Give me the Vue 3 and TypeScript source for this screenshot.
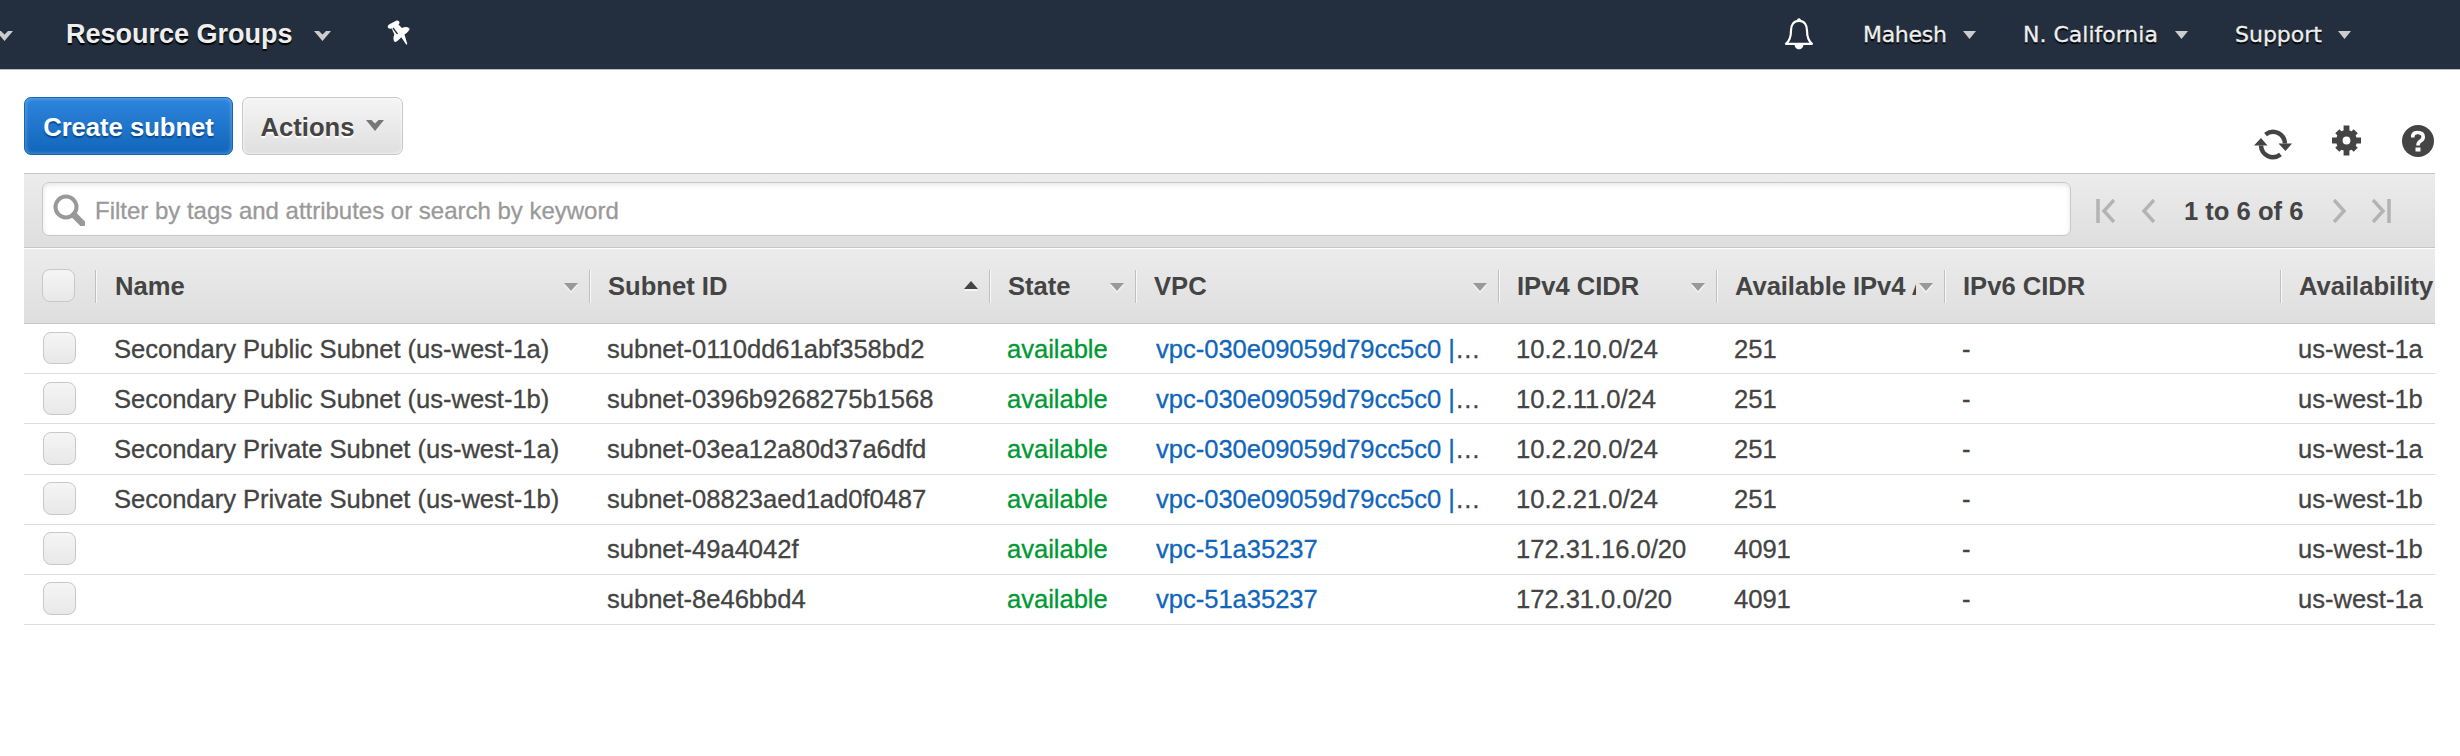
<script setup lang="ts">
interface Column { label: string; sort: 'up' | 'down' | '' }
interface Subnet { name: string; id: string; vpc: string; more: boolean; cidr: string; free: string; zone: string }

const columns: Column[] = [
  { label: 'Name', sort: 'down' },
  { label: 'Subnet ID', sort: 'up' },
  { label: 'State', sort: 'down' },
  { label: 'VPC', sort: 'down' },
  { label: 'IPv4 CIDR', sort: 'down' },
  { label: 'Available IPv4 A', sort: 'down' },
  { label: 'IPv6 CIDR', sort: '' },
  { label: 'Availability', sort: '' },
]

const subnets: Subnet[] = [
  { name: 'Secondary Public Subnet (us-west-1a)', id: 'subnet-0110dd61abf358bd2', vpc: 'vpc-030e09059d79cc5c0', more: true, cidr: '10.2.10.0/24', free: '251', zone: 'us-west-1a' },
  { name: 'Secondary Public Subnet (us-west-1b)', id: 'subnet-0396b9268275b1568', vpc: 'vpc-030e09059d79cc5c0', more: true, cidr: '10.2.11.0/24', free: '251', zone: 'us-west-1b' },
  { name: 'Secondary Private Subnet (us-west-1a)', id: 'subnet-03ea12a80d37a6dfd', vpc: 'vpc-030e09059d79cc5c0', more: true, cidr: '10.2.20.0/24', free: '251', zone: 'us-west-1a' },
  { name: 'Secondary Private Subnet (us-west-1b)', id: 'subnet-08823aed1ad0f0487', vpc: 'vpc-030e09059d79cc5c0', more: true, cidr: '10.2.21.0/24', free: '251', zone: 'us-west-1b' },
  { name: '', id: 'subnet-49a4042f', vpc: 'vpc-51a35237', more: false, cidr: '172.31.16.0/20', free: '4091', zone: 'us-west-1b' },
  { name: '', id: 'subnet-8e46bbd4', vpc: 'vpc-51a35237', more: false, cidr: '172.31.0.0/20', free: '4091', zone: 'us-west-1a' },
]
</script>

<template>
  <div class="page">
    <nav class="nav">
      <svg class="caret first" width="17" height="10" viewBox="0 0 17 10"><path d="M0 0h5l3.500 3.500L12 0h5L8.500 10z" /></svg>
      <span class="brand">Resource Groups</span>
      <svg class="caret" width="17" height="10" viewBox="0 0 17 10"><path d="M0 0h5l3.500 3.500L12 0h5L8.500 10z" /></svg>
      <svg class="pin" width="24" height="25" viewBox="0 0 24 25">
        <path d="M.6 7Q.6 5.500 2 4.500L9.500.6Q11.500 0 12.500 2 12.700 3.500 11.500 4.500L15 8Q19.500 6 22.500 8.500 23.200 10.500 17.500 14.500L20.300 24 19.300 24.700 14.300 17.200Q9.500 22.500 7.500 21.800 5.500 19 7.300 14.500L4.800 8.500Q1.500 9.500.6 7z" />
        <path class="pin-slot" d="m6 8 4.500 6" />
      </svg>
      <svg class="bell" width="30" height="32" viewBox="0 0 30 32">
        <path class="bell-body" d="M15 2.800C9.500 2.800 7 7 7 12.500c0 7-1.500 10.500-5 13.300h26c-3.500-2.800-5-6.300-5-13.300C23 7 20.500 2.800 15 2.800z" />
        <path class="bell-fill" d="M13 3a2 2.800 0 0 1 4 0zM10.500 26h9c0 7-9 7-9 0z" />
      </svg>
      <span class="item mahesh">Mahesh</span>
      <svg class="small-caret" width="13" height="8" viewBox="0 0 13 8"><path d="M0 0h13L6.500 8z" /></svg>
      <span class="item region">N. California</span>
      <svg class="small-caret" width="13" height="8" viewBox="0 0 13 8"><path d="M0 0h13L6.500 8z" /></svg>
      <span class="item support">Support</span>
      <svg class="small-caret" width="13" height="8" viewBox="0 0 13 8"><path d="M0 0h13L6.500 8z" /></svg>
    </nav>

    <div class="toolbar">
      <button class="btn primary">Create subnet</button>
      <button class="btn plain">
        Actions
        <svg width="18" height="12" viewBox="0 0 18 12"><path d="M0 1h5.500L9 4.500 12.500 1H18L9 12z" /></svg>
      </button>
      <div class="tools">
        <svg class="refresh" width="38" height="31" viewBox="0 0 38 31">
          <path class="arc" d="M11.500 5.500C20 -1 30.500 5 31 14.500M26.500 25.500C18 32 7.500 26 7 16.500" />
          <path d="M24.500 14.500H38L31.500 22zM0 16.500h13.500L7 9z" />
        </svg>
        <svg class="gear" width="29" height="31" viewBox="0 0 29 31">
          <path class="spokes" d="M14.500.5v30M0 15.500h29" />
          <path class="spokes" d="m5.300 6.300 18.400 18.400M23.700 6.300 5.300 24.700" />
          <circle cx="14.500" cy="15.500" r="10.500" />
          <circle class="hub" cx="14.500" cy="15.500" r="3.900" />
        </svg>
        <svg class="help" width="32" height="32" viewBox="0 0 32 32">
          <circle cx="16" cy="16" r="16" />
          <path class="mark" d="M10.800 12.500V10.500Q11.500 7.500 15.500 7.500q5.700 0 5.700 4.500 0 2.500-2.700 4-2.500 1.500-2.500 4.500" />
          <path class="dot" d="M13.500 22.500h5v4h-5z" />
        </svg>
      </div>
    </div>

    <div class="filter">
      <div class="search">
        <svg width="32" height="32" viewBox="0 0 32 32"><circle cx="13" cy="13" r="10.500" /><path d="m21 21 8.500 8.500" /></svg>
        <span>Filter by tags and attributes or search by keyword</span>
      </div>
      <div class="pager">
        <svg width="19" height="24" viewBox="0 0 19 24"><path d="M2 0v24M18 1 8 12l10 11" /></svg>
        <svg class="prev" width="14" height="24" viewBox="0 0 14 24"><path d="M13 1 3 12l10 11" /></svg>
        <span>1 to 6 of 6</span>
        <svg class="next" width="14" height="24" viewBox="0 0 14 24"><path d="m1 1 10 11L1 23" /></svg>
        <svg class="last" width="19" height="24" viewBox="0 0 19 24"><path d="M17 0v24M1 1l10 11L1 23" /></svg>
      </div>
    </div>

    <div class="grid head">
      <div class="check-cell"><span class="check"></span></div>
      <div v-for="c in columns" :key="c.label" class="th">
        <span class="label">{{ c.label }}</span>
        <span v-if="c.sort" class="sort" :class="c.sort"></span>
      </div>
    </div>
    <div v-for="(s, i) in subnets" :key="s.id" class="grid row" :class="{ tall: i === 2, raised: i > 2 }">
      <div class="check-cell"><span class="check"></span></div>
      <div class="td">{{ s.name }}</div>
      <div class="td">{{ s.id }}</div>
      <div class="td state">available</div>
      <div class="td vpc"><a>{{ s.vpc }}<template v-if="s.more"> |</template></a><template v-if="s.more">…</template></div>
      <div class="td">{{ s.cidr }}</div>
      <div class="td">{{ s.free }}</div>
      <div class="td">-</div>
      <div class="td">{{ s.zone }}</div>
    </div>
  </div>
</template>

<style>
body { margin: 0; background: #fff; }
</style>

<style scoped>
.page { width: 2460px; height: 756px; overflow: hidden; background: #fff; color: #444; font: 25.6px/30px "Liberation Sans", Arial, sans-serif; }
.page * { box-sizing: border-box; }
svg { display: block; flex: none; }
.nav { height: 70px; display: flex; align-items: flex-start; background: #232f3e; border-bottom: 1px solid #b9bec5; overflow: hidden; white-space: nowrap; }
.caret { margin-top: 31px; fill: #ccc; }
.caret.first { margin-left: -4px; }
.brand { width: 229px; margin: 19px 19px 0 53px; font-size: 27px; font-weight: bold; color: #eee; text-shadow: 0 2px 1px #000; }
.pin { margin: 20px 0 0 56px; fill: #fff; }
.pin-slot { stroke: #232f3e; stroke-width: 1.300; }
.bell { margin: 18px 0 0 1373px; }
.bell-body { fill: none; stroke: #fff; stroke-width: 2.200; stroke-linejoin: round; }
.bell-fill { fill: #fff; }
.item { margin-top: 20px; font: 22px/30px "DejaVu Sans", Verdana, sans-serif; color: #eee; text-shadow: 0 2px 1px #000; -webkit-text-stroke: .3px #eee; }
.mahesh { width: 100px; margin-left: 49px; letter-spacing: -0.300px; }
.region { width: 152px; margin-left: 47px; }
.support { width: 103px; margin-left: 47px; }
.small-caret { margin-top: 31px; fill: #ccc; }
.toolbar { height: 103px; padding: 27px 26px 0 24px; display: flex; align-items: flex-start; }
.btn { height: 58px; padding: 0; border-radius: 7px; font: bold 25.600px/58px "Liberation Sans", Arial, sans-serif; display: flex; justify-content: center; white-space: nowrap; }
.primary { width: 209px; color: #fff; border: 1px solid #1166bb; background: linear-gradient(#2e85dc, #1166bb); box-shadow: inset 0 0 4px rgba(255, 255, 255, .4); text-shadow: 0 2px 1px #0a4a8c; }
.plain { width: 161px; margin-left: 9px; color: #444; border: 1px solid #c8c8c8; background: linear-gradient(#f5f5f5, #dfdfdf); box-shadow: inset 0 0 3px #fff; text-shadow: 0 2px 1px #fff; }
.plain svg { margin: 21px 0 0 12px; fill: #777; }
.tools { margin: 28px 0 0 auto; display: flex; fill: #444; }
.refresh { margin-top: 4px; }
.arc { fill: none; stroke: #444; stroke-width: 4.500; }
.gear { margin: 0 0 0 40px; }
.spokes { fill: none; stroke: #444; stroke-width: 5.800; }
.hub { fill: #fff; }
.help { margin: 0 0 0 41px; }
.mark { fill: none; stroke: #fff; stroke-width: 3.600; }
.dot { fill: #fff; }
.filter { width: 2411px; height: 75px; margin-left: 24px; padding: 9px 0 0 18px; display: flex; border-top: 1px solid #c6c6c6; border-bottom: 1px solid #c6c6c6; background: linear-gradient(#ececec, #dedede); }
.search { width: 2029px; height: 54px; margin-top: -1px; padding-left: 10px; display: flex; align-items: center; background: #fff; border: 1px solid #c8c8c8; border-radius: 7px; box-shadow: inset 0 2px 5px rgba(0, 0, 0, .1); color: #999; font-size: 24px; }
.search svg { margin-top: 2px; fill: none; stroke: #999; }
.search circle { stroke-width: 4; }
.search path { stroke-width: 6.500; stroke-linecap: round; }
.search span { margin: 4px 0 0 10px; letter-spacing: -.01px; -webkit-text-stroke: .3px #999; }
.pager { display: flex; padding-top: 16px; margin-left: 25px; font-weight: bold; white-space: nowrap; }
.pager svg { fill: none; stroke: #b3b3b3; stroke-width: 3.500; }
.pager .prev { margin-left: 26px; }
.pager span { width: 118px; margin: -3px 0 0 29px; }
.pager .next { margin-left: 31px; }
.pager .last { margin-left: 25px; }
.grid { width: 2411px; margin-left: 24px; display: grid; grid-template-columns: 71px 494px 400px 146px 363px 218px 228px 336px 155px; }
.head { height: 76px; border-top: 1px solid #fff; border-bottom: 1px solid #c6c6c6; background: linear-gradient(#ececec, #dedede); font-weight: bold; }
.check-cell { padding: 8px 0 0 19px; }
.head .check-cell { padding: 20px 0 0 18px; }
.check { display: block; width: 33px; height: 33px; border: 1px solid #c8c8c8; border-radius: 8px; background: linear-gradient(#f5f5f5, #e8e8e8); }
.th { height: 33px; margin-top: 21px; padding: 1px 11px 0 18px; display: flex; border-left: 1px solid #c0c0c0; box-shadow: inset 1px 0 #f8f8f8; overflow: hidden; }
.th:nth-child(2) { padding-left: 19px; }
.label { flex: 1; min-width: 0; margin-right: 4px; overflow: hidden; white-space: nowrap; }
.th:nth-child(7) .label { margin-right: 3px; letter-spacing: -.06px; }
.th:last-child { padding-right: 0; }
.th:last-child .label { margin-right: 0; }
.sort { width: 0; height: 0; margin-top: 12px; border: 7px solid transparent; border-bottom-width: 0; border-top: 8px solid #999; filter: drop-shadow(0 2px 0 #f5f5f5); }
.sort.up { margin-top: 10px; border: 7px solid transparent; border-top-width: 0; border-bottom: 8px solid #444; }
.row { height: 50px; border-bottom: 1px solid #ddd; -webkit-text-stroke: .3px; }
.row.tall { height: 51px; }
.row:nth-child(5) .check { height: 32px; }
.td { padding: 10px 0 0 18px; overflow: hidden; white-space: nowrap; letter-spacing: -.04px; }
.td:nth-child(2) { padding-left: 19px; }
.raised .td { padding-top: 9px; }
.raised .check-cell { padding-top: 7px; }
.state { color: #093; }
.td.vpc { padding-left: 21px; }
.vpc a { color: #16b; }
</style>
